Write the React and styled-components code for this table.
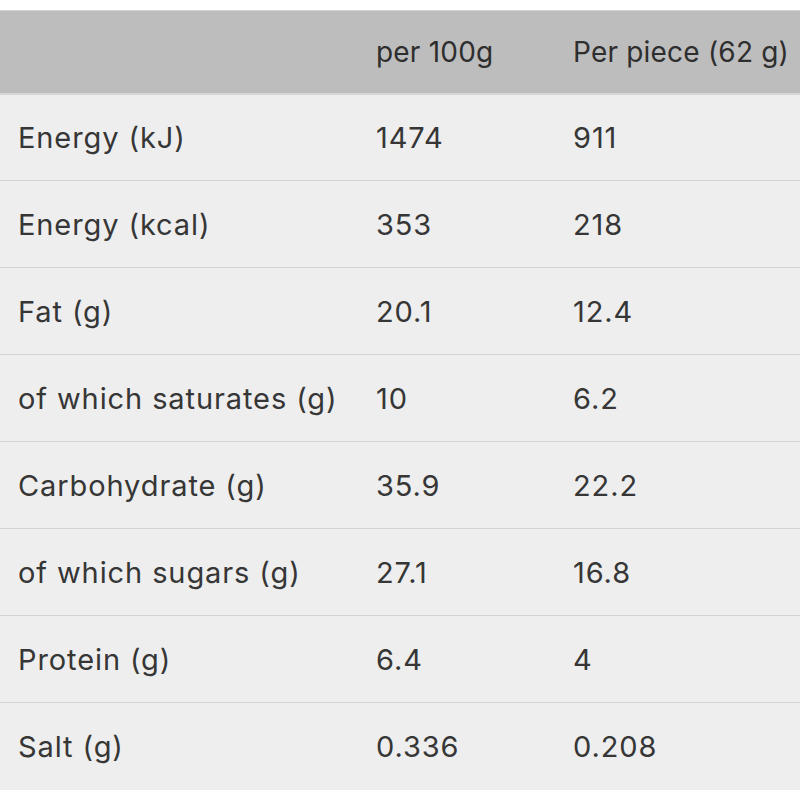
import React from 'react';
import styled, { createGlobalStyle } from 'styled-components';

const GlobalStyle = createGlobalStyle`
  html, body {
    margin: 0;
    padding: 0;
    background: #ffffff;
  }
  body {
    font-family: Inter, "Noto Sans", sans-serif;
  }
`;

const Page = styled.div`
  padding-top: 10px;
  width: 800px;
`;

const Table = styled.table`
  width: 100%;
  border-collapse: collapse;
  table-layout: fixed;
  color: #363636;
  font-size: 29px;
  letter-spacing: 0.9px;
`;

const HeadRow = styled.tr`
  background: #bdbdbd;
  height: 83px;
  border-top: 1px solid #d2d2d2;
  border-bottom: 2px solid #d6d6d6;
`;

const Row = styled.tr`
  background: #eeeeee;
  height: 87px;
  border-bottom: 1px solid #d3d3d3;

  &:last-child {
    border-bottom: none;
  }
`;

const Th = styled.th`
  box-sizing: border-box;
  font-weight: 400;
  font-size: 28px;
  letter-spacing: 0.2px;
  text-align: left;
  padding: 0 0 0 18px;
  width: ${p => p.$w}px;
  white-space: nowrap;
  color: #2e2e2e;
`;

const Td = styled.td`
  padding: 0 0 0 18px;
  white-space: nowrap;
`;

const rows = [
  ['Energy (kJ)', '1474', '911'],
  ['Energy (kcal)', '353', '218'],
  ['Fat (g)', '20.1', '12.4'],
  ['of which saturates (g)', '10', '6.2'],
  ['Carbohydrate (g)', '35.9', '22.2'],
  ['of which sugars (g)', '27.1', '16.8'],
  ['Protein (g)', '6.4', '4'],
  ['Salt (g)', '0.336', '0.208'],
];

export default function App() {
  return (
    <Page>
      <GlobalStyle />
      <Table>
        <thead>
          <HeadRow>
            <Th $w={358}></Th>
            <Th $w={197}>per 100g</Th>
            <Th $w={245}>Per piece (62 g)</Th>
          </HeadRow>
        </thead>
        <tbody>
          {rows.map(([name, a, b]) => (
            <Row key={name}>
              <Td>{name}</Td>
              <Td>{a}</Td>
              <Td>{b}</Td>
            </Row>
          ))}
        </tbody>
      </Table>
    </Page>
  );
}
